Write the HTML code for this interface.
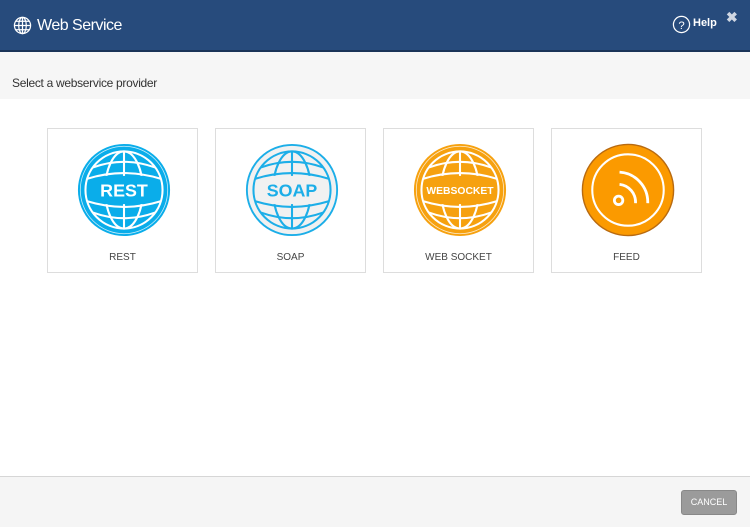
<!DOCTYPE html>
<html><head><meta charset="utf-8"><style>
*{margin:0;padding:0;box-sizing:border-box}
body{width:750px;height:527px;background:#fff;font-family:"Liberation Sans",sans-serif;position:relative;overflow:hidden}
.hdr{position:absolute;left:0;top:0;width:750px;height:52px;background:#274b7c;border-bottom:2px solid #1a3458}
.title{position:absolute;left:37px;top:17px;color:#fff;font-size:16px;letter-spacing:-0.5px}
.help{position:absolute;left:693px;top:17px;color:#fff;font-size:11px;font-weight:bold}
.x{position:absolute;left:726px;top:9px;color:#cfd6e2;font-size:14px;font-weight:bold}
.sub{position:absolute;left:0;top:52px;width:750px;height:47px;background:#f6f6f6}
.sub span{position:absolute;left:12px;top:24px;font-size:12px;color:#333;letter-spacing:-0.3px}
.card{position:absolute;top:128px;width:151px;height:145px;border:1px solid #ddd;background:#fff}
.card svg{position:absolute;left:29px;top:14px}
.card .l{position:absolute;left:0;width:100%;top:123px;text-align:center;font-size:10px;color:#444}
.ftr{position:absolute;left:0;top:476px;width:750px;height:51px;background:#f5f5f5;border-top:1px solid #d6d6d6}
.btn{position:absolute;left:681px;top:490px;width:56px;height:25px;background:#9b9b9b;border:1px solid #888;border-radius:3px;color:#fff;font-size:9px;text-align:center;line-height:23px}
</style></head><body>
<svg width="0" height="0" style="position:absolute"><defs>
<mask id="m"><rect width="100" height="100" fill="#fff"/><rect x="0" y="35" width="100" height="30" fill="#000"/></mask>
<g id="globe"><circle cx="50" cy="50" r="41"/><g mask="url(#m)"><ellipse cx="50" cy="50" rx="20" ry="41"/><line x1="50" y1="9" x2="50" y2="91"/></g>
<path d="M17 26Q50 14 83 26M17 74Q50 86 83 74M11 38Q50 26 89 38M11 62Q50 74 89 62"/></g>
</defs></svg>
<div class="hdr">
<svg style="position:absolute;left:13px;top:16px" width="19" height="19" viewBox="0 0 20 20" fill="none" stroke="#fff" stroke-width="1.3"><circle cx="10" cy="10" r="8.5"/><ellipse cx="10" cy="10" rx="4" ry="8.5"/><line x1="10" y1="1.5" x2="10" y2="18.5"/><line x1="1.5" y1="10" x2="18.5" y2="10"/><path d="M3 5.5h14M3 14.5h14"/></svg>
<div class="title">Web Service</div>
<svg style="position:absolute;left:672px;top:15px" width="19" height="19" viewBox="0 0 20 20"><circle cx="10" cy="10" r="8.5" fill="none" stroke="#fff" stroke-width="1.3"/><text x="10" y="14.5" font-size="12" fill="#fff" text-anchor="middle" font-family="Liberation Sans">?</text></svg>
<div class="help">Help</div>
<div class="x">✖</div>
</div>
<div class="sub"><span>Select a webservice provider</span></div>

<div class="card" style="left:47px">
<svg width="94" height="94" viewBox="0 0 100 100"><circle cx="50" cy="50" r="49" fill="#0aadea"/><circle cx="50" cy="50" r="46.5" fill="none" stroke="#fff" stroke-width=".8" opacity=".8"/><use href="#globe" fill="none" stroke="#fff" stroke-width="2.2"/><text x="50" y="57" font-size="19" font-weight="bold" fill="#fff" text-anchor="middle" font-family="Liberation Sans">REST</text></svg>
<div class="l">REST</div></div>

<div class="card" style="left:215px">
<svg width="94" height="94" viewBox="0 0 100 100"><circle cx="50" cy="50" r="48" fill="#f1f1f1" stroke="#1caee8" stroke-width="2"/><use href="#globe" fill="none" stroke="#1caee8" stroke-width="2.2"/><text x="50" y="57" font-size="19" font-weight="bold" fill="#1caee8" text-anchor="middle" font-family="Liberation Sans">SOAP</text></svg>
<div class="l">SOAP</div></div>

<div class="card" style="left:383px">
<svg width="94" height="94" viewBox="0 0 100 100"><circle cx="50" cy="50" r="49" fill="#f6a10f"/><circle cx="50" cy="50" r="46.5" fill="none" stroke="#fff" stroke-width=".8" opacity=".8"/><use href="#globe" fill="none" stroke="#fff" stroke-width="2.2"/><text x="50" y="54" font-size="11" font-weight="bold" fill="#fff" text-anchor="middle" font-family="Liberation Sans">WEBSOCKET</text></svg>
<div class="l">WEB SOCKET</div></div>

<div class="card" style="left:551px">
<svg width="94" height="94" viewBox="0 0 100 100"><circle cx="50" cy="50" r="48.5" fill="#fb9a00" stroke="#b86a10" stroke-width="1.5"/><circle cx="50" cy="50" r="38" fill="none" stroke="#fff" stroke-width="2.2"/><circle cx="40" cy="61" r="4.5" fill="none" stroke="#fff" stroke-width="3"/><path d="M41 44A19 19 0 0 1 58 64M41 31A32 32 0 0 1 71 64" fill="none" stroke="#fff" stroke-width="3"/></svg>
<div class="l">FEED</div></div>

<div class="ftr"></div>
<div class="btn">CANCEL</div>
</body></html>
